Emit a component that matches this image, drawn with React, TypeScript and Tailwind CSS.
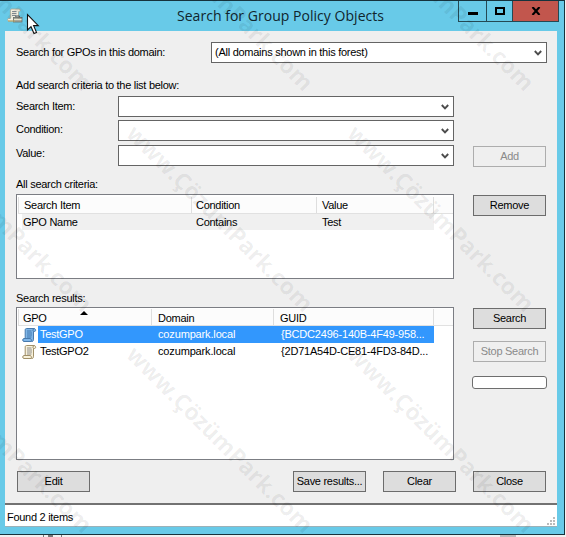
import type { ReactNode } from "react";

function Combo({ children }: { children?: ReactNode }) {
  return (
    <div className="flex h-[21px] w-[336px] items-center justify-between border border-[#646464] bg-white pl-[3px] pr-1">
      <span className="tracking-[-0.26px]">{children}</span>
      <svg width="8" height="6" viewBox="0 0 8 6" className="shrink-0">
        <path d="M0.8 1 L4 4.3 L7.2 1" fill="none" stroke="#4c4c4c" strokeWidth="1.9" />
      </svg>
    </div>
  );
}

function Button({ children, disabled, className = "" }: { children: ReactNode; disabled?: boolean; className?: string }) {
  const tone = disabled
    ? "border-[#adadad] bg-[#efefef] text-[#8a8a8a]"
    : "border-[#6c6c6c] bg-[#dddddd] text-black";
  return (
    <button disabled={disabled} className={`flex h-[21px] w-[73px] shrink-0 items-center justify-center whitespace-nowrap border ${tone} ${className}`}>
      {children}
    </button>
  );
}

function Scroll({ selected }: { selected?: boolean }) {
  const paper = selected ? "#7fb6e8" : "#f8f1da";
  const edge = selected ? "#4779ac" : "#a08f68";
  const line = selected ? "#3a6fa8" : "#858585";
  return (
    <svg width="15" height="16" viewBox="0 0 15 16" className="shrink-0">
      <path d="M4.5 1.5 H12 C14 1.5 14.2 4.5 12.5 4.5 H11.5 V12.2 C11.5 14.3 10.5 14.5 9.5 14.5 H2 C0.2 14.5 0.4 11.5 2 11.5 H3.2 V3 C3.2 2 3.7 1.5 4.5 1.5 Z" fill={paper} stroke={edge} />
      <path d="M2 11.5 H8.5 C9.5 12 9 14 10 14.4 M11.5 4.5 C10.5 4 11 1.8 12 1.6" fill="none" stroke={edge} />
      <path d="M5 4 H9.5 M5 6 H10 M5 8 H10 M5 10 H9.5" stroke={line} strokeWidth="0.9" />
    </svg>
  );
}

function AppIcon() {
  return (
    <svg width="16" height="16" viewBox="0 0 16 16">
      <path d="M4 1 H12 C13.8 1 13.6 3.5 12 3.5 H11.5 V13 H2 C0 13 0.3 10.4 2 10.4 H3.4 V2 Z" fill="#f4efe0" stroke="#a6a391" strokeWidth="0.8" />
      <path d="M5 3.5 H9.5 M5 5.5 H9.5 M5 7.5 H9" stroke="#7b8790" strokeWidth="0.9" />
      <path d="M8.8 9.5 V8 H12.5 V9.5" fill="none" stroke="#58636b" />
      <rect x="6.5" y="9.5" width="8.5" height="4.5" fill="#a9a99c" stroke="#68706c" strokeWidth="0.8" />
      <path d="M7 11.5 H14.5" stroke="#e8e4cd" />
      <path d="M1 13 H8" stroke="#c0a765" />
    </svg>
  );
}

const TILES = [-93, 128, 349];
const ROWS = [-91, 130, 351];

function Watermark() {
  return (
    <svg width="566" height="537" viewBox="0 0 566 537" className="pointer-events-none absolute left-0 top-0">
      {ROWS.flatMap((y) =>
        TILES.map((x) => (
          <text
            key={`${x},${y}`}
            transform={`translate(${x - 3} ${y + 5}) rotate(45)`}
            textLength="252"
            fill="#000"
            fillOpacity="0.07"
            fontSize="23"
            fontWeight="700"
            fontFamily="'Open Sans', sans-serif"
          >
            www.ÇözümPark.com
          </text>
        )),
      )}
    </svg>
  );
}

export default function App() {
  return (
    <div className="relative h-[537px] w-[566px] overflow-hidden bg-[#f1f1f1] font-['Liberation_Sans',Arial,sans-serif] text-[11px] leading-[13px] tracking-[-0.28px] text-black">
      <div className="h-[535px] w-[565px] border-b border-r border-t border-[#16333d] bg-[#68cae8]">
        <header className="flex h-[30px]">
          <div className="pl-[7px] pt-[7px]"><AppIcon /></div>
          <h1 className="ml-[154px] w-[281px] whitespace-nowrap pt-[5px] font-['Open_Sans',sans-serif] text-[14px] leading-5 tracking-[0.03px] text-[#10252d]">
            Search for Group Policy Objects
          </h1>
          <div className="flex h-[21px] border-x border-b border-[#244954]">
            <div className="flex w-7 items-center justify-center border-r border-[#244954]">
              <div className="mt-1 h-[3px] w-[10px] bg-black" />
            </div>
            <div className="flex w-[26px] items-center justify-center border-r border-[#244954]">
              <div className="h-2 w-[10px] border-2 border-black" />
            </div>
            <div className="flex w-[45px] items-center justify-center bg-[#c2564d]">
              <svg width="10" height="8" viewBox="0 0 10 8"><path d="M1.5 0 L8.5 8 M8.5 0 L1.5 8" stroke="#000" strokeWidth="2.1" /></svg>
            </div>
          </div>
        </header>

        <main className="ml-[5px] h-[496px] w-[552px] bg-[#efefef]">
          <div className="h-[472px] pl-[11px] pt-[11px]">
            <div className="flex items-center">
              <span className="w-[195px]">Search for GPOs in this domain:</span>
              <Combo>(All domains shown in this forest)</Combo>
            </div>
            <div className="flex justify-between pr-[11px]">
              <section className="w-[438px]">
                <p className="pt-4">Add search criteria to the list below:</p>
                <div className="mt-1 flex items-center"><span className="w-[102px]">Search Item:</span><Combo /></div>
                <div className="mt-[3px] flex items-center"><span className="w-[102px] pb-[2px]">Condition:</span><Combo /></div>
                <div className="mt-1 flex items-center"><span className="w-[102px] pb-1">Value:</span><Combo /></div>
                <p className="mt-3 h-4">All search criteria:</p>
                <div className="h-[85px] border border-[#7b7d83] bg-white pl-px pt-[2px]">
                  <div className="flex h-[17px] items-center border-b border-[#e1e1e1] bg-[#fcfcfc]">
                    <span className="h-full w-[174px] border-l border-r border-[#dedede] pl-[5px] pt-[2px]">Search Item</span>
                    <span className="h-full w-[125px] border-r border-[#dedede] pl-1 pt-[2px]">Condition</span>
                    <span className="h-full w-[117px] border-r border-[#dedede] pl-[5px] pt-[2px]">Value</span>
                  </div>
                  <div className="ml-1 flex h-[16px] w-[412px] items-center bg-[#f0f0f0]">
                    <span className="w-[174px] pl-px">GPO Name</span>
                    <span className="w-[126px]">Contains</span>
                    <span>Test</span>
                  </div>
                </div>
                <p className="mt-[13px] h-[15px]">Search results:</p>
                <div className="h-[153px] border border-[#7b7d83] bg-white pl-px pt-px">
                  <div className="relative flex h-[17px] border-b border-[#e1e1e1] bg-[#fcfcfc]">
                    <span className="w-[134px] border-x border-[#dedede] pl-1 pt-[3px]">GPO</span>
                    <span className="w-[122px] border-r border-[#dedede] pl-[6px] pt-[3px]">Domain</span>
                    <span className="w-[160px] border-r border-[#dedede] pl-[6px] pt-[3px]">GUID</span>
                    <div className="absolute left-[62px] top-[2px] h-0 w-0 border-x-4 border-b-4 border-x-transparent border-b-black" />
                  </div>
                  <div className="flex h-[17px] items-center pl-1">
                    <Scroll selected />
                    <div className="ml-px flex h-full w-[396px] items-center bg-[#3297fd] text-white">
                      <span className="w-[120px] pl-[2px]">TestGPO</span>
                      <span className="w-[123px] tracking-[-0.15px]">cozumpark.local</span>
                      <span className="tracking-[-0.2px]">{"{BCDC2496-140B-4F49-958..."}</span>
                    </div>
                  </div>
                  <div className="flex h-[17px] items-center pl-1">
                    <Scroll />
                    <div className="ml-px flex h-full w-[396px] items-center">
                      <span className="w-[120px] pl-[2px]">TestGPO2</span>
                      <span className="w-[123px] tracking-[-0.15px]">cozumpark.local</span>
                      <span className="tracking-[-0.2px]">{"{2D71A54D-CE81-4FD3-84D..."}</span>
                    </div>
                  </div>
                </div>
              </section>
              <aside className="flex w-[73px] flex-col pt-[83px]">
                <Button disabled>Add</Button>
                <Button className="mt-7">Remove</Button>
                <Button className="mt-[92px]">Search</Button>
                <Button disabled className="mt-3">Stop Search</Button>
                <div className="-mx-px mt-[14px] h-[13px] w-[75px] rounded-[3px] border border-[#6e6e6e] bg-white" />
              </aside>
            </div>
            <footer className="mt-[11px] flex pl-px">
              <Button>Edit</Button>
              <Button className="ml-[203px]">Save results...</Button>
              <Button className="ml-[17px]">Clear</Button>
              <Button className="ml-[17px]">Close</Button>
            </footer>
          </div>
          <div className="flex h-6 items-center justify-between border-b border-t-2 border-b-[#9bb1b8] border-t-[#727272] bg-white pl-[2px]">
            <span className="pt-[3px]">Found 2 items</span>
            <svg width="10" height="10" viewBox="0 0 10 10" className="mt-[10px]">
              <path d="M6 1h2v2H6zM3 4h2v2H3zM6 4h2v2H6zM0 7h2v2H0zM3 7h2v2H3zM6 7h2v2H6z" fill="#bbb" />
            </svg>
          </div>
        </main>
      </div>
      <div className="ml-[43px] flex h-[2px] gap-1"><i className="w-px bg-[#777]" /><i className="w-[5px] bg-[#777]" /><i className="ml-[4px] w-px bg-[#777]" /><i className="ml-[434px] w-4 bg-[#bbb]" /></div>
      <Watermark />
      <svg width="14" height="23" viewBox="0 0 14 23" className="absolute left-[26px] top-[13px]">
        <path d="M1.5 1.5 V17 L5 13.7 L8 20.5 L10.5 19.4 L7.6 12.6 H12.3 Z" fill="#fff" stroke="#111" strokeWidth="1.1" />
      </svg>
    </div>
  );
}
